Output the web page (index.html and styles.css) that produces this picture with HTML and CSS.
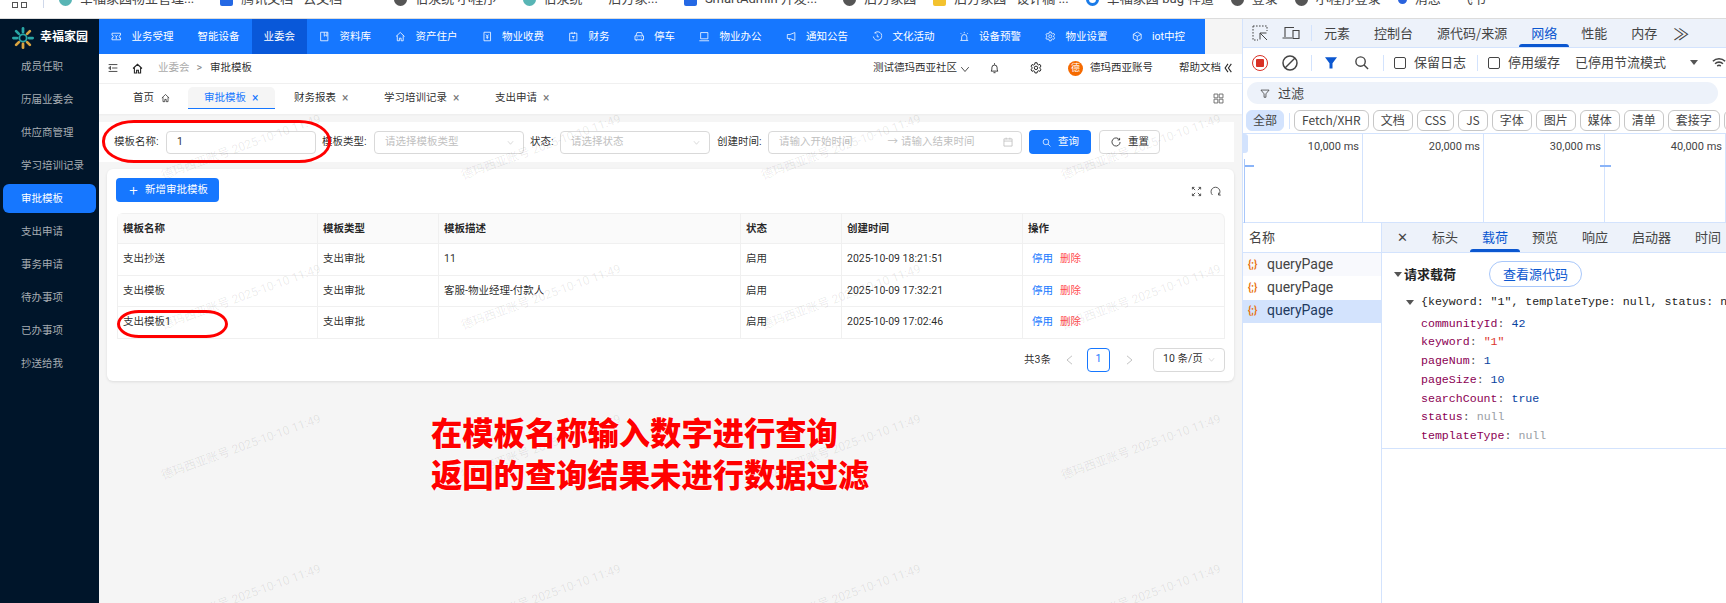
FILE: index.html
```html
<!DOCTYPE html>
<html lang="zh-CN">
<head>
<meta charset="utf-8">
<title>审批模板</title>
<link rel="stylesheet" href="styles.css">
</head>
<body>
<svg class="sprite" aria-hidden="true">
  <symbol id="i-ticket" viewBox="0 0 16 16"><path d="M1.5 3h13v3a2 2 0 0 0 0 4v3h-13v-3a2 2 0 0 0 0-4z"/><path d="M6 6l2 2.5L10 6M8 8.5V12"/></symbol>
  <symbol id="i-book" viewBox="0 0 16 16"><path d="M2.5 1.5h11v13h-11z"/><path d="M8 1.5v6l2-1.5 2 1.5v-6"/></symbol>
  <symbol id="i-home" viewBox="0 0 16 16"><path d="M1.5 8L8 1.8 14.500 8M3.500 6.500v8h3.200v-4h2.600v4h3.200v-8"/></symbol>
  <symbol id="i-bill" viewBox="0 0 16 16"><path d="M3 1.500h10v13H3z"/><path d="M6 5l2 2.500L10 5M8 7.500V12M6 9h4"/></symbol>
  <symbol id="i-cal" viewBox="0 0 16 16"><path d="M2.500 3h11v11.500h-11zM6 1v3M10 1v3"/><path d="M6 8h4M8 8v4"/></symbol>
  <symbol id="i-date" viewBox="0 0 16 16"><path d="M1.500 3h13v11.500h-13zM1.500 6.500h13M5 1v3M11 1v3"/></symbol>
  <symbol id="i-car" viewBox="0 0 16 16"><path d="M3 7l1.500-5h7L13 7M1.500 7h13v6h-13zM3.500 13v2M12.500 13v2M4 10h1.500M10.500 10H12"/></symbol>
  <symbol id="i-laptop" viewBox="0 0 16 16"><path d="M2.500 2h11v9.500h-11zM.5 14.500h15"/></symbol>
  <symbol id="i-horn" viewBox="0 0 16 16"><path d="M13.500 2v12L6 11H2V5h4zM4.500 11l1 3.500"/></symbol>
  <symbol id="i-tag" viewBox="0 0 16 16"><path d="M4 2.500A6.500 6.500 0 1 1 2 8M4 2.500l3 .3M8 5v3.500h2.500"/></symbol>
  <symbol id="i-alarm" viewBox="0 0 16 16"><path d="M4 13.500V9a4 4 0 0 1 8 0v4.500M2 14h12M8 1v2M2.500 3l1.500 1.500M13.500 3L12 4.500"/></symbol>
  <symbol id="i-gear" viewBox="0 0 16 16"><path d="M6.600 1h2.800l.4 2 1.600.9 1.900-.7 1.400 2.400-1.500 1.300v1.800l1.500 1.300-1.400 2.400-1.900-.7-1.600.9-.4 2H6.600l-.4-2-1.600-.9-1.900.7-1.400-2.400 1.500-1.300V7.100L1.300 5.800l1.400-2.400 1.900.7 1.600-.9z"/><circle cx="8" cy="7.800" r="2.300"/></symbol>
  <symbol id="i-cube" viewBox="0 0 16 16"><path d="M8 1.200l6 3.400v6.800l-6 3.400-6-3.400V4.600zM2 4.600L8 8l6-3.400M8 8v6.800"/></symbol>
  <symbol id="i-menu" viewBox="0 0 16 16"><path d="M1 2.500h14M6.500 8H15M1 13.500h14M4 5.500L1 8l3 2.500z"/></symbol>
  <symbol id="i-bell" viewBox="0 0 16 16"><path d="M3 12.500c1-1 1.200-2.500 1.200-5a3.800 3.800 0 0 1 7.600 0c0 2.500.2 4 1.200 5zM6.500 14.800h3M8 1v2"/></symbol>
  <symbol id="i-grid" viewBox="0 0 16 16"><path d="M1.500 1.500h5.500v5.500H1.500zM9 1.500h5.500v5.500H9zM1.500 9h5.500v5.500H1.500zM9 9h5.500v5.500H9z"/></symbol>
  <symbol id="i-chev-down" viewBox="0 0 16 16"><path d="M2 5l6 7 6-7"/></symbol>
  <symbol id="i-chev-left" viewBox="0 0 8 12"><path d="M7 1L1 6l6 5"/></symbol>
  <symbol id="i-chev-right" viewBox="0 0 8 12"><path d="M1 1l6 5-6 5"/></symbol>
  <symbol id="i-fold" viewBox="0 0 9 12"><path d="M4.500 1L1 6l3.500 5M8.500 1L5 6l3.500 5"/></symbol>
  <symbol id="i-search" viewBox="0 0 16 16"><circle cx="7" cy="7" r="5"/><path d="M10.700 10.700L15 15"/></symbol>
  <symbol id="i-reload" viewBox="0 0 16 16"><path d="M13.500 4.500A6.500 6.500 0 1 0 14.500 8M13.800 1.500v3.200h-3.200"/></symbol>
  <symbol id="i-expand" viewBox="0 0 16 16"><path d="M2 2l4 4M2 5V2h3M14 2l-4 4M11 2h3v3M2 14l4-4M2 11v3h3M14 14l-4-4M11 14h3v-3"/></symbol>
  <symbol id="i-sync" viewBox="0 0 16 16"><path d="M3.500 13A6.500 6.500 0 1 1 12.500 13M12.500 9.800V13.200h3.200"/></symbol>
  <symbol id="i-inspect" viewBox="0 0 16 16"><path d="M1 1h14v5M1 1v14h5" stroke-dasharray="1.600 1.400"/><path d="M8 8h6.500M8 8v6.500M8 8l7 7"/></symbol>
  <symbol id="i-device" viewBox="0 0 18 16"><path d="M3 12V2.500h9M.5 13h9.500M11 5.500h6v8h-6z"/></symbol>
  <symbol id="i-block" viewBox="0 0 16 16"><circle cx="8" cy="8" r="7"/><path d="M3 13L13 3"/></symbol>
  <symbol id="i-funnel" viewBox="0 0 16 16"><path d="M1.500 2.500h13L9.500 8.500V14h-3V8.500z"/></symbol>
  <symbol id="i-wifi" viewBox="0 0 16 16"><path d="M1 6a10 10 0 0 1 14 0M3.500 8.800a6.500 6.500 0 0 1 9 0M6 11.500a3 3 0 0 1 4 0"/></symbol>
</svg>

<header class="bookmarks">
  <div class="bm-row">
    <span class="apps"><i></i><i></i></span>
    <span class="bm-sep"></span>
    <span class="bm bm-a"><b class="fav fav-teal"></b>幸福家园物业管理...</span>
    <span class="bm bm-b"><b class="fav fav-blue"></b>腾讯文档 - 云文档</span>
    <span class="bm bm-c"><b class="fav fav-grey"></b>伯泉统 小程序</span>
    <span class="bm bm-b"><b class="fav fav-teal"></b>伯泉统</span>
    <span class="bm bm-b">后方家...</span>
    <span class="bm bm-b"><b class="fav fav-blue"></b>SmartAdmin 开发...</span>
    <span class="bm bm-b"><b class="fav fav-grey"></b>后方家园</span>
    <span class="bm bm-d"><b class="fav fav-gold"></b>后方家园 - 设计稿 ...</span>
    <span class="bm bm-d"><b class="fav fav-swirl"></b>幸福家园-bug-禅道</span>
    <span class="bm bm-d"><b class="fav fav-grey"></b>登录</span>
    <span class="bm bm-d"><b class="fav fav-grey"></b>小程序登录</span>
    <span class="bm bm-d"><b class="fav fav-dot"></b>消息</span>
    <span class="bm bm-e">飞书</span>
  </div>
</header>

<div class="window">
  <div class="app">
    <aside class="sidebar">
      <div class="logo">
        <svg class="logo-mark" viewBox="0 0 24 24">
          <g fill="none" stroke-width="3" stroke-linecap="round">
            <circle cx="12" cy="12" r="4" stroke="#2aa6a6" stroke-width="2"/>
            <path d="M12 1.500v4" stroke="#2aa6a6"/><path d="M12 18.500v4" stroke="#d9a441"/>
            <path d="M1.500 12h4" stroke="#2aa6a6"/><path d="M18.500 12h4" stroke="#2aa6a6"/>
            <path d="M4.500 4.500l3 3" stroke="#2aa6a6"/><path d="M16.500 16.500l3 3" stroke="#d9a441"/>
            <path d="M19.500 4.500l-3 3" stroke="#d9a441"/><path d="M7.500 16.500l-3 3" stroke="#d9a441"/>
          </g>
        </svg>
        <span class="logo-text">幸福家园</span>
      </div>
      <nav class="side-menu">
        <a class="side-item">成员任职</a>
        <a class="side-item">历届业委会</a>
        <a class="side-item">供应商管理</a>
        <a class="side-item">学习培训记录</a>
        <a class="side-item is-active">审批模板</a>
        <a class="side-item">支出申请</a>
        <a class="side-item">事务申请</a>
        <a class="side-item">待办事项</a>
        <a class="side-item">已办事项</a>
        <a class="side-item">抄送给我</a>
      </nav>
    </aside>

    <main class="main">
      <nav class="topnav">
        <a class="nav-item"><svg class="ico nav-ico"><use href="#i-ticket"/></svg>业务受理</a>
        <a class="nav-item">智能设备</a>
        <a class="nav-item is-active">业委会</a>
        <a class="nav-item"><svg class="ico nav-ico"><use href="#i-book"/></svg>资料库</a>
        <a class="nav-item"><svg class="ico nav-ico"><use href="#i-home"/></svg>资产住户</a>
        <a class="nav-item"><svg class="ico nav-ico"><use href="#i-bill"/></svg>物业收费</a>
        <a class="nav-item"><svg class="ico nav-ico"><use href="#i-cal"/></svg>财务</a>
        <a class="nav-item"><svg class="ico nav-ico"><use href="#i-car"/></svg>停车</a>
        <a class="nav-item"><svg class="ico nav-ico"><use href="#i-laptop"/></svg>物业办公</a>
        <a class="nav-item"><svg class="ico nav-ico"><use href="#i-horn"/></svg>通知公告</a>
        <a class="nav-item"><svg class="ico nav-ico"><use href="#i-tag"/></svg>文化活动</a>
        <a class="nav-item"><svg class="ico nav-ico"><use href="#i-alarm"/></svg>设备预警</a>
        <a class="nav-item"><svg class="ico nav-ico"><use href="#i-gear"/></svg>物业设置</a>
        <a class="nav-item"><svg class="ico nav-ico"><use href="#i-cube"/></svg>iot中控</a>
      </nav>

      <div class="crumbs">
        <svg class="ico crumb-menu"><use href="#i-menu"/></svg>
        <svg class="ico crumb-home"><use href="#i-home"/></svg>
        <span class="crumb-muted">业委会</span>
        <span class="crumb-arrow">&gt;</span>
        <span class="crumb-current">审批模板</span>
        <div class="crumb-right">
          <span>测试德玛西亚社区</span>
          <svg class="ico crumb-chev"><use href="#i-chev-down"/></svg>
          <svg class="ico crumb-bell"><use href="#i-bell"/></svg>
          <svg class="ico crumb-gear"><use href="#i-gear"/></svg>
          <span class="avatar">德</span>
          <span class="crumb-user">德玛西亚账号</span>
          <span class="crumb-help">帮助文档</span>
          <svg class="ico crumb-fold"><use href="#i-fold"/></svg>
        </div>
      </div>

      <div class="tabs">
        <span class="tab">首页<svg class="ico tab-home"><use href="#i-home"/></svg></span>
        <span class="tab is-active">审批模板<span class="tab-x">×</span></span>
        <span class="tab">财务报表<span class="tab-x">×</span></span>
        <span class="tab">学习培训记录<span class="tab-x">×</span></span>
        <span class="tab">支出申请<span class="tab-x">×</span></span>
        <svg class="ico tabs-grid"><use href="#i-grid"/></svg>
      </div>

      <section class="filter">
        <label class="f-label">模板名称:</label>
        <div class="field"><span class="field-value">1</span></div>
        <label class="f-label">模板类型:</label>
        <div class="field"><span class="ph">请选择模板类型</span><svg class="ico field-chev"><use href="#i-chev-down"/></svg></div>
        <label class="f-label f-label-state">状态:</label>
        <div class="field"><span class="ph">请选择状态</span><svg class="ico field-chev"><use href="#i-chev-down"/></svg></div>
        <label class="f-label f-label-time">创建时间:</label>
        <div class="field field-date">
          <span class="ph date-start">请输入开始时间</span>
          <span class="date-arrow">→</span>
          <span class="ph date-end">请输入结束时间</span>
          <svg class="ico date-cal"><use href="#i-date"/></svg>
        </div>
        <button class="btn btn-primary btn-search"><svg class="ico btn-ico"><use href="#i-search"/></svg>查询</button>
        <button class="btn btn-default"><svg class="ico btn-ico btn-ico-lg"><use href="#i-reload"/></svg>重置</button>
      </section>

      <section class="card">
        <div class="card-bar">
          <button class="btn btn-primary btn-add"><span class="plus">+</span>新增审批模板</button>
          <div class="card-tools">
            <svg class="ico"><use href="#i-expand"/></svg>
            <svg class="ico"><use href="#i-sync"/></svg>
          </div>
        </div>
        <table class="grid">
          <colgroup>
            <col class="c-name"><col class="c-type"><col class="c-desc"><col class="c-state"><col class="c-time"><col>
          </colgroup>
          <thead>
            <tr><th>模板名称</th><th>模板类型</th><th>模板描述</th><th>状态</th><th>创建时间</th><th>操作</th></tr>
          </thead>
          <tbody>
            <tr><td>支出抄送</td><td>支出审批</td><td>11</td><td>启用</td><td>2025-10-09 18:21:51</td><td><a class="act">停用</a><a class="act act-del">删除</a></td></tr>
            <tr><td>支出模板</td><td>支出审批</td><td>客服-物业经理-付款人</td><td>启用</td><td>2025-10-09 17:32:21</td><td><a class="act">停用</a><a class="act act-del">删除</a></td></tr>
            <tr><td>支出模板1</td><td>支出审批</td><td></td><td>启用</td><td>2025-10-09 17:02:46</td><td><a class="act">停用</a><a class="act act-del">删除</a></td></tr>
          </tbody>
        </table>
        <div class="pager">
          <span>共3条</span>
          <span class="pg-arrow pg-prev"><svg class="ico pg-ico"><use href="#i-chev-left"/></svg></span>
          <span class="pg-num">1</span>
          <span class="pg-arrow pg-next"><svg class="ico pg-ico"><use href="#i-chev-right"/></svg></span>
          <span class="pg-size">10 条/页<svg class="ico pg-chev"><use href="#i-chev-down"/></svg></span>
        </div>
      </section>

      <div class="watermarks" aria-hidden="true">
        <span>德玛西亚账号 2025-10-10 11:49</span><span>德玛西亚账号 2025-10-10 11:49</span><span>德玛西亚账号 2025-10-10 11:49</span><span>德玛西亚账号 2025-10-10 11:49</span>
        <span>德玛西亚账号 2025-10-10 11:49</span><span>德玛西亚账号 2025-10-10 11:49</span><span>德玛西亚账号 2025-10-10 11:49</span><span>德玛西亚账号 2025-10-10 11:49</span>
        <span>德玛西亚账号 2025-10-10 11:49</span><span>德玛西亚账号 2025-10-10 11:49</span><span>德玛西亚账号 2025-10-10 11:49</span><span>德玛西亚账号 2025-10-10 11:49</span>
        <span>德玛西亚账号 2025-10-10 11:49</span><span>德玛西亚账号 2025-10-10 11:49</span><span>德玛西亚账号 2025-10-10 11:49</span><span>德玛西亚账号 2025-10-10 11:49</span>
      </div>
    </main>
  </div>

  <aside class="devtools">
    <div class="dt-tabs">
      <svg class="ico dt-inspect"><use href="#i-inspect"/></svg>
      <svg class="ico dt-device"><use href="#i-device"/></svg>
      <span class="dt-sep dt-sep-tabs"></span>
      <span class="dt-tab">元素</span>
      <span class="dt-tab">控制台</span>
      <span class="dt-tab">源代码/来源</span>
      <span class="dt-tab is-active">网络</span>
      <span class="dt-tab">性能</span>
      <span class="dt-tab">内存</span>
      <span class="dt-more">≫</span>
    </div>
    <div class="dt-bar">
      <span class="rec"><i></i></span>
      <svg class="ico dt-block"><use href="#i-block"/></svg>
      <span class="dt-sep dt-sep-a"></span>
      <svg class="dt-funnel" viewBox="0 0 16 16"><path d="M0 1h16L10 9v7H6V9z"/></svg>
      <svg class="ico dt-search"><use href="#i-search"/></svg>
      <span class="dt-sep dt-sep-b"></span>
      <span class="cb cb-a"></span><span class="cb-text">保留日志</span>
      <span class="dt-sep dt-sep-c"></span>
      <span class="cb cb-b"></span><span class="cb-text">停用缓存</span>
      <span class="throttle">已停用节流模式</span>
      <span class="tri tri-throttle"></span>
      <svg class="ico dt-wifi"><use href="#i-wifi"/></svg>
    </div>
    <div class="dt-filter-row">
      <div class="dt-filter"><svg class="ico dt-filter-ico"><use href="#i-funnel"/></svg>过滤</div>
    </div>
    <div class="chips">
      <span class="chip chip-on">全部</span>
      <span class="dt-sep chip-sep"></span>
      <span class="chip">Fetch/XHR</span>
      <span class="chip">文档</span>
      <span class="chip">CSS</span>
      <span class="chip">JS</span>
      <span class="chip">字体</span>
      <span class="chip">图片</span>
      <span class="chip">媒体</span>
      <span class="chip">清单</span>
      <span class="chip">套接字</span>
      <span class="chip">Wasm</span>
    </div>
    <div class="timeline">
      <span class="tl-col">10,000 ms</span>
      <span class="tl-col">20,000 ms</span>
      <span class="tl-col">30,000 ms</span>
      <span class="tl-col">40,000 ms</span>
      <span class="tl-handle"></span>
      <span class="tl-left"></span>
      <span class="tl-dash tl-dash-a"></span>
      <span class="tl-dash tl-dash-b"></span>
    </div>
    <div class="panel">
      <div class="reqs">
        <div class="reqs-head">名称</div>
        <div class="req req-hover"><span class="req-ico">{;}</span>queryPage</div>
        <div class="req"><span class="req-ico">{;}</span>queryPage</div>
        <div class="req req-on"><span class="req-ico">{;}</span>queryPage</div>
      </div>
      <div class="detail">
        <div class="detail-tabs">
          <span class="detail-x">✕</span>
          <span class="dt-tab">标头</span>
          <span class="dt-tab is-active">载荷</span>
          <span class="dt-tab">预览</span>
          <span class="dt-tab">响应</span>
          <span class="dt-tab">启动器</span>
          <span class="dt-tab">时间</span>
        </div>
        <div class="payload">
          <div class="payload-head">
            <span class="tri tri-head"></span>
            <strong class="payload-title">请求载荷</strong>
            <span class="src-btn">查看源代码</span>
          </div>
          <div class="tree-root"><span class="tri tri-tree"></span>{keyword: "1", templateType: null, status: null, pageNum: 1, pageSize: 10}</div>
          <div class="tree-line"><span class="k">communityId</span>: <span class="n">42</span></div>
          <div class="tree-line"><span class="k">keyword</span>: <span class="s">"1"</span></div>
          <div class="tree-line"><span class="k">pageNum</span>: <span class="n">1</span></div>
          <div class="tree-line"><span class="k">pageSize</span>: <span class="n">10</span></div>
          <div class="tree-line"><span class="k">searchCount</span>: <span class="n">true</span></div>
          <div class="tree-line"><span class="k">status</span>: <span class="u">null</span></div>
          <div class="tree-line"><span class="k">templateType</span>: <span class="u">null</span></div>
        </div>
      </div>
    </div>
  </aside>
</div>

<div class="mark mark-filter"></div>
<div class="mark mark-row"></div>
<div class="note">在模板名称输入数字进行查询<br>返回的查询结果未进行数据过滤</div>
</body>
</html>
```
FILE: styles.css
```css
* { box-sizing: border-box; }
html, body { margin: 0; padding: 0; }
body {
  position: relative;
  width: 1726px;
  height: 603px;
  overflow: hidden;
  background: #fff;
  color: rgba(0, 0, 0, .85);
  font: 10.5px/1.4 Roboto, "Noto Sans CJK SC", sans-serif;
}
a { text-decoration: none; }
.sprite { position: absolute; width: 0; height: 0; }
.ico { display: block; flex: none; width: 11px; height: 11px; fill: none; stroke: currentColor; stroke-width: 1.3; overflow: visible; }

/* browser bookmarks */
.bookmarks { height: 19px; overflow: hidden; border-bottom: 1px solid #dcdcdc; background: #fff; font-size: 13px; color: #444; }
.bm-row { display: flex; align-items: center; height: 18px; margin-top: -10px; padding-left: 12px; white-space: nowrap; }
.apps { display: flex; gap: 3px; width: 15px; align-self: flex-end; height: 14px; align-items: flex-end; }
.apps i { width: 6px; height: 6px; border: 1.500px solid #555; }
.bm-sep { width: 1px; height: 18px; margin-left: 16px; background: #cfd8ea; }
.bm { display: flex; align-items: center; gap: 8px; }
.bm-a { margin-left: 15px; }
.bm-b { margin-left: 26px; }
.bm-c { margin-left: 52px; }
.bm-d { margin-left: 17px; }
.bm-e { margin-left: 19px; }
.fav { width: 13px; height: 13px; border-radius: 50%; flex: none; }
.fav-teal { background: #58b5b5; }
.fav-blue { background: #2468e4; border-radius: 2px; }
.fav-grey { background: #555; }
.fav-gold { background: #f3c22e; border-radius: 2px; }
.fav-swirl { background: #fff; border: 3px solid #1a7be8; }
.fav-dot { background: #2a63dd; width: 9px; height: 9px; }

/* app shell */
.window { display: flex; height: 584px; }
.app { display: flex; flex: none; width: 1242px; }
.sidebar { flex: none; width: 99px; background: #00152a; color: #a7adb3; }
.logo { display: flex; align-items: center; gap: 6px; height: 33px; padding: 4px 0 0 12px; }
.logo-mark { flex: none; width: 22px; height: 22px; }
.logo-text { color: #fff; font-size: 12px; font-weight: 700; white-space: nowrap; }
.side-menu { display: flex; flex-direction: column; gap: 4px; padding: 0 3px; }
.side-item { display: flex; align-items: center; height: 29px; padding: 2px 0 0 18px; border-radius: 6px; color: #a7adb3; white-space: nowrap; }
.side-item.is-active { background: #1677ff; color: #fff; }

.main { position: relative; flex: 1; min-width: 0; background: #f5f5f5; }
.topnav { display: flex; width: 1106px; height: 35px; background: #1677ff; }
.nav-item { display: flex; align-items: center; padding: 2px 12px 0; color: #fff; white-space: nowrap; }
.nav-item.is-active { background: #0958d9; }
.nav-ico { width: 10.500px; height: 11px; margin: -2px 10px 0 0; stroke-width: 1.200; }

.crumbs { display: flex; align-items: center; height: 30px; padding: 1px 10px 1px 9px; background: #fff; border-bottom: 1px solid #f0f0f0; }
.crumb-menu { width: 10px; height: 10px; margin-top: -1px; }
.crumb-home { width: 11px; height: 11px; margin: -1px 0 0 14px; stroke-width: 1.600; }
.crumb-muted { margin-left: 15px; color: #aaa; }
.crumb-arrow { margin-left: 7px; color: #888; }
.crumb-current { margin-left: 8px; }
.crumb-right { display: flex; align-items: center; margin-left: auto; }
.crumb-chev { width: 10px; height: 10px; margin-left: 3px; }
.crumb-bell { width: 11px; height: 12px; margin: -2px 0 0 19px; }
.crumb-gear { width: 12px; height: 12px; margin: -2px 0 0 30px; }
.avatar { display: flex; align-items: center; justify-content: center; width: 15px; height: 15px; margin-left: 26px; border-radius: 50%; background: #f56a00; color: #fff; font-size: 9px; }
.crumb-user { margin-left: 7px; }
.crumb-help { margin-left: 26px; }
.crumb-fold { width: 8px; height: 10px; margin: -1px 0 0 3px; }

.tabs { display: flex; align-items: flex-start; height: 30px; padding: 3px 18px 0; background: #fff; box-shadow: 0 1px 2px rgba(0, 0, 0, .04); }
.tab { display: flex; align-items: center; height: 22px; margin-right: 3px; padding: 1px 15px 0 16px; border-bottom: 1px solid transparent; border-radius: 5px 5px 0 0; white-space: nowrap; }
.tab.is-active { background: #f5f5f5; border-bottom-color: #1677ff; color: #1677ff; }
.tab-x { margin-left: 6px; width: 8px; font-size: 12px; line-height: 1; color: #777; }
.tab.is-active .tab-x { color: #1677ff; }
.tab-home { width: 9px; height: 10px; margin-left: 7px; }
.tabs-grid { margin: 6px 0 0 auto; width: 11px; height: 11px; color: #666; }

/* filter */
.filter { display: flex; align-items: center; gap: 6px; height: 40px; margin: 8px 8px 0 0; padding-left: 15px; background: #fff; }
.f-label { flex: none; width: 46px; white-space: nowrap; }
.f-label-state { width: 24px; }
.f-label-time { margin-left: 1px; }
.field { position: relative; display: flex; align-items: center; flex: none; width: 150px; height: 23px; padding: 0 10px; border: 1px solid #d9d9d9; border-radius: 4px; background: #fff; }
.field-value { color: #333; }
.ph { color: #bfbfbf; white-space: nowrap; }
.field-chev { margin-left: auto; width: 7px; height: 7px; margin-right: -1px; color: #bfbfbf; }
.field-date { width: 254px; margin-left: -1px; padding-right: 8px; }
.date-arrow { margin-left: 35px; color: #bfbfbf; }
.date-end { margin-left: 3px; }
.date-cal { margin-left: auto; width: 10px; height: 10px; color: #bfbfbf; }
.btn { display: inline-flex; align-items: center; flex: none; height: 24px; border: 1px solid transparent; border-radius: 4px; padding: 0; font: inherit; }
.btn-primary { background: #1677ff; color: #fff; }
.btn-default { width: 61px; margin-left: 2px; padding-left: 11px; background: #fff; border-color: #d9d9d9; color: rgba(0, 0, 0, .85); }
.btn-search { width: 62px; margin-left: 1px; padding-left: 12px; }
.btn-ico { width: 9px; height: 9px; margin-right: 7px; }
.btn-ico-lg { width: 10px; height: 10px; }

/* table card */
.card { margin: 7px 8px 0 8px; padding: 9px 9px 9px 9px; background: #fff; border-radius: 6px; box-shadow: 0 1px 3px rgba(0, 0, 0, .1); }
.card-bar { display: flex; align-items: center; justify-content: space-between; height: 24px; margin-bottom: 11px; }
.btn-add { width: 103px; padding-left: 12px; }
.plus { width: 9px; margin-right: 7px; font-size: 15px; font-weight: 300; line-height: 1; }
.card-tools { display: flex; gap: 8px; padding: 3px 4px 0 0; color: #444; }
.grid { width: 1108px; margin-left: 1px; border-collapse: separate; border-spacing: 0; table-layout: fixed; border-top: 1px solid #f0f0f0; border-left: 1px solid #f0f0f0; border-radius: 6px 6px 0 0; }
.c-name { width: 200px; }
.c-type { width: 121px; }
.c-desc { width: 302px; }
.c-state { width: 101px; }
.c-time { width: 181px; }
.grid th, .grid td { padding: 1px 5px 0; border-right: 1px solid #f0f0f0; border-bottom: 1px solid #f0f0f0; text-align: left; white-space: nowrap; }
.grid th { height: 30px; background: #fafafa; font-weight: 700; }
.grid th:last-child { border-top-right-radius: 6px; }
.grid td { height: 31.500px; background: transparent; }
.act { margin-left: 4px; margin-right: 7px; color: #1677ff; }
.act-del { margin-left: 0; color: #ff4d4f; }

.pager { display: flex; align-items: center; justify-content: flex-end; height: 24px; margin-top: 9px; padding-top: 1px; }
.pg-arrow { display: flex; justify-content: center; width: 23px; color: #bbb; }
.pg-ico { width: 7px; height: 10px; stroke-width: 1.100; }
.pg-prev { margin: 0 6px 0 7px; }
.pg-next { margin: 0 12px 0 8px; }
.pg-num { display: flex; align-items: center; justify-content: center; width: 23px; height: 24px; margin-top: -1px; border: 1px solid #1677ff; border-radius: 4px; color: #1677ff; }
.pg-size { display: flex; align-items: center; width: 72px; height: 24px; margin-top: -1px; padding: 0 9px; border: 1px solid #d9d9d9; border-radius: 4px; white-space: nowrap; }
.pg-chev { margin-left: auto; width: 7px; height: 7px; color: #bfbfbf; margin-right: 0; }

/* watermark overlay */
.watermarks { position: absolute; left: -8px; top: 53px; display: grid; grid-template-columns: repeat(4, 300px); grid-auto-rows: 150px; width: 1151px; height: 531px; overflow: hidden; pointer-events: none; }
.watermarks span { display: flex; align-items: center; justify-content: center; font-size: 12px; color: rgba(0, 0, 0, .085); white-space: nowrap; transform: rotate(-20deg); }

/* devtools */
.devtools { display: flex; flex-direction: column; flex: none; width: 484px; border-left: 1px solid #d3e3fd; background: #fff; color: #444; font-size: 13px; font-family: "Noto Sans CJK SC", Roboto, sans-serif; overflow: hidden; }
.dt-tabs { display: flex; align-items: center; flex: none; height: 29px; padding-left: 9px; background: #edf2fa; border-bottom: 1px solid #d3e3fd; }
.dt-inspect { width: 16px; height: 16px; stroke-width: 1; }
.dt-device { width: 18px; height: 16px; margin-left: 14px; stroke-width: 1.100; }
.dt-sep { flex: none; width: 1px; height: 16px; background: #d3e3fd; }
.dt-sep-tabs { margin: 0 0 0 11px; }
.dt-tab { position: relative; display: flex; align-items: center; flex: none; height: 100%; padding: 0 12px; white-space: nowrap; }
.dt-tab.is-active { color: #0b57d0; }
.dt-tab.is-active::after { content: ""; position: absolute; left: 0; right: 0; bottom: 0; height: 3px; border-radius: 3px 3px 0 0; background: #0b57d0; }
.dt-more { margin-left: 4px; font-size: 16px; line-height: 1; }

.dt-bar { display: flex; align-items: center; flex: none; height: 30px; padding-left: 9px; border-bottom: 1px solid #d3e3fd; white-space: nowrap; }
.rec { display: flex; align-items: center; justify-content: center; flex: none; width: 16px; height: 16px; border: 1.600px solid #d93025; border-radius: 50%; }
.rec i { width: 8px; height: 8px; border-radius: 1px; background: #d93025; }
.dt-block { width: 16px; height: 16px; margin-left: 14px; stroke-width: 1.500; }
.dt-sep-a { margin-left: 13px; }
.dt-funnel { flex: none; width: 12px; height: 13px; margin-left: 13px; fill: #0b57d0; }
.dt-search { width: 15px; height: 15px; margin-left: 17px; stroke-width: 1.500; }
.dt-sep-b { margin-left: 14px; }
.cb { flex: none; width: 12px; height: 12px; border: 1.200px solid #444; border-radius: 2px; }
.cb-a { margin-left: 10px; }
.cb-b { margin-left: 10px; }
.cb-text { margin-left: 8px; }
.dt-sep-c { margin-left: 11px; }
.throttle { margin-left: 15px; }
.tri { flex: none; width: 0; height: 0; border-left: 4.500px solid transparent; border-right: 4.500px solid transparent; border-top: 5px solid #555; }
.tri-throttle { margin-left: 24px; }
.dt-wifi { width: 14px; height: 14px; margin-left: 14px; stroke-width: 1.800; }

.dt-filter-row { flex: none; height: 29px; padding: 4px 8px 3px 4px; }
.dt-filter { display: flex; align-items: center; height: 22px; padding-left: 13px; border-radius: 11px; background: #edf2fa; }
.dt-filter-ico { width: 10px; height: 11px; margin-right: 8px; }

.chips { display: flex; align-items: flex-start; flex: none; gap: 4px; height: 27px; padding: 3px 0 0 3px; font-size: 12px; white-space: nowrap; border-bottom: 1px solid #d3e3fd; }
.chip { display: flex; align-items: center; flex: none; height: 21px; padding: 0 7px; border: 1px solid #c7c7c7; border-radius: 6px; }
.chip-on { width: 38px; padding: 0 6px; border-color: #d3e3fd; background: #d3e3fd; }
.chip-sep { align-self: center; margin: -2px 0 0 1px; }

.timeline { position: relative; display: grid; flex: none; grid-template-columns: 120px 121px 121px 121px; height: 89px; border-bottom: 1px solid #d3e3fd; font: 11px/25px Roboto, sans-serif; }
.tl-col { padding-right: 3px; border-right: 1px solid #d3e3fd; text-align: right; white-space: nowrap; }
.tl-handle { position: absolute; left: 0; top: 0; width: 5px; height: 19px; background: #d3e3fd; border-radius: 0 3px 3px 0; }
.tl-left { position: absolute; left: 1px; top: 25px; width: 1px; height: 64px; background: #a8c7fa; }
.tl-dash { position: absolute; top: 31px; height: 2px; background: #8ab4f8; }
.tl-dash-a { left: 2px; width: 9px; }
.tl-dash-b { left: 357px; width: 11px; }

.panel { display: flex; flex: 1; min-height: 0; }
.reqs { flex: none; width: 139px; border-right: 1px solid #d3e3fd; }
.reqs-head { height: 30px; padding-left: 6px; line-height: 28px; border-bottom: 1px solid #d3e3fd; }
.req { display: flex; align-items: center; height: 23.300px; padding-left: 5px; font-family: Roboto, sans-serif; font-size: 14px; }
.req-hover { background: #f8f9fd; }
.req-on { background: #d3e3fd; color: #1f3a5f; }
.req-ico { width: 14px; margin-right: 5px; color: #e8710a; font-size: 10px; font-weight: 700; white-space: nowrap; }
.detail { flex: 1; min-width: 0; overflow: hidden; }
.detail-tabs { display: flex; align-items: center; height: 30px; background: #edf2fa; border-bottom: 1px solid #d3e3fd; }
.detail-x { flex: none; width: 38px; padding-left: 15px; font-size: 13px; }
.payload { height: 196px; padding: 8px 0 0 12px; border-bottom: 1px solid #d3e3fd; }
.payload-head { display: flex; align-items: center; height: 26px; }
.payload-title { margin-left: 2px; color: #222; font-weight: 700; white-space: nowrap; }
.src-btn { display: flex; align-items: center; justify-content: center; width: 93px; height: 26px; margin-left: 33px; border: 1px solid #a8c7fa; border-radius: 13px; color: #0b57d0; }
.tree-root, .tree-line { font: 11.600px/18.700px "Liberation Mono", monospace; white-space: nowrap; }
.tree-root { display: flex; align-items: center; margin: 6px 0 3px 12px; color: #222; white-space: pre; }
.tri-tree { margin-right: 7px; }
.tree-line { padding-left: 27px; color: #555; }
.k { color: #8b0053; }
.n { color: #0842a0; }
.s { color: #dc362e; }
.u { color: #9aa0a6; }

/* annotations drawn over the screenshot */
.mark { position: absolute; border: 3px solid #f00; pointer-events: none; }
.mark-filter { left: 102px; top: 120px; width: 229px; height: 43px; border-radius: 32px / 21px; }
.mark-row { left: 117px; top: 310px; width: 111px; height: 28px; border-radius: 22px / 14px; }
.note { position: absolute; left: 431px; top: 411px; color: #f00; font: 900 31.300px/42px "Noto Sans CJK SC", sans-serif; white-space: nowrap; text-shadow: 0 0 2px #fff, 0 0 2px #fff; }
```
